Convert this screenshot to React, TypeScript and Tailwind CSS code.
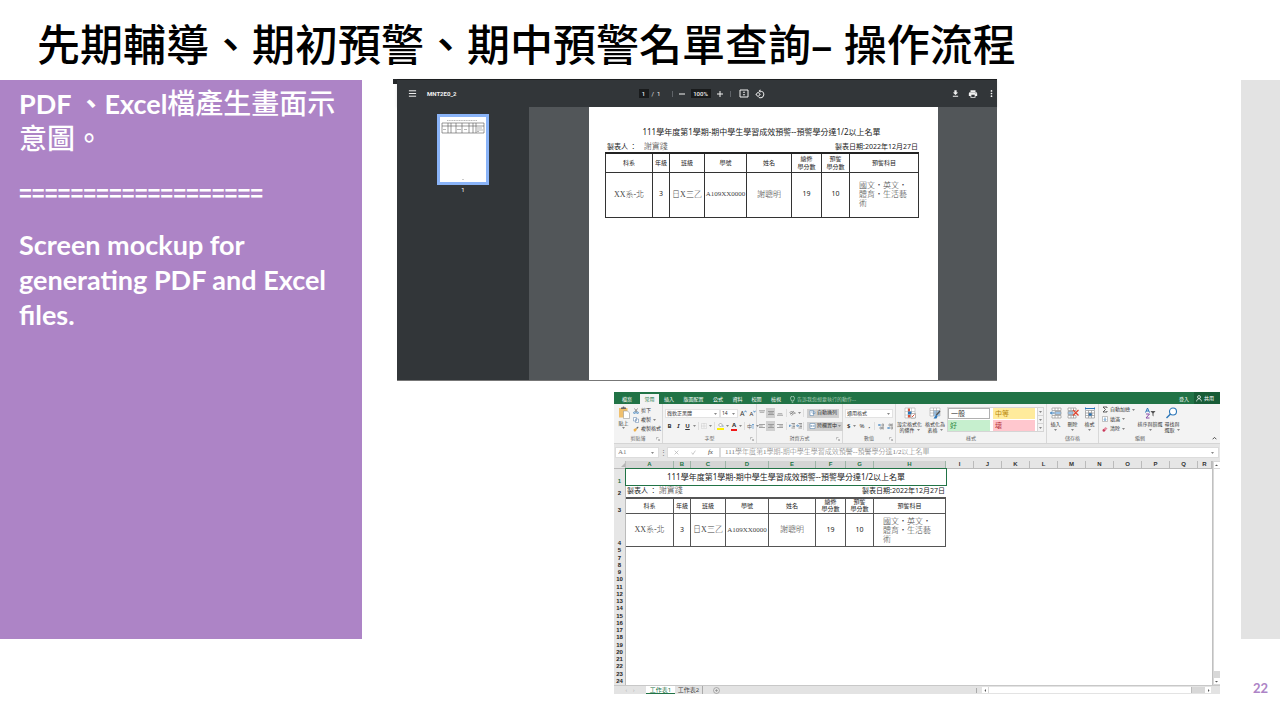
import React from 'react';

const REPORT_TITLE = '111學年度第1學期-期中學生學習成效預警--預警學分達1/2以上名單';

const SANS = "font-['Noto_Sans','Noto_Sans_CJK_TC',sans-serif]";
const SERIF = "font-['Liberation_Serif','Noto_Sans_CJK_TC',serif] font-light text-[#444]";

const fields = [
  { name: '科系', value: 'XX系-北', typed: true, pdf: 'w-[47px]', sheet: 'w-[48px]' },
  { name: '年級', value: '3', typed: false, pdf: 'w-[17px]', sheet: 'w-[17px]' },
  { name: '班級', value: '日X三乙', typed: true, pdf: 'w-[35px]', sheet: 'w-[35px]' },
  { name: '學號', value: 'A109XX0000', typed: true, pdf: 'w-[42px]', sheet: 'w-[43px]' },
  { name: '姓名', value: '謝聰明', typed: true, pdf: 'w-[45px]', sheet: 'w-[47px]' },
  { name: '總修\n學分數', value: '19', typed: false, pdf: 'w-[30px]', sheet: 'w-[30px]' },
  { name: '預警\n學分數', value: '10', typed: false, pdf: 'w-[28px]', sheet: 'w-[28px]' },
  {
    name: '預警科目',
    value: '國文・英文・\n體育・生活藝\n術',
    typed: true,
    pdf: 'w-[69px]',
    sheet: 'w-[72px]',
  },
];

const valueClass = (value: string, typed: boolean) => {
  if (!typed) return 'text-[7px] text-center';
  if (value.startsWith('A109')) return `${SERIF} text-[7px] text-center`;
  if (value.includes('\n')) return `${SERIF} text-[8px] leading-[9px] text-left pl-[9px]`;
  return `${SERIF} text-[8px] text-center`;
};

const Caret: React.FC = () => (
  <svg viewBox="0 0 6 4" className="w-[3px] h-[2px] shrink-0" fill="#888">
    <path d="M0 0h6L3 4z" />
  </svg>
);

const Launcher: React.FC = () => (
  <svg viewBox="0 0 8 8" className="w-1 h-1" fill="none" stroke="#888">
    <path d="M1 5V1h4M4 4l3 3M7 4v3H4" />
  </svg>
);

/* ---------- PDF viewer ---------- */

const ReportTable: React.FC = () => (
  <table className="w-full table-fixed border-collapse border border-t-2 border-[#222]">
    <thead>
      <tr className="h-[19px]">
        {fields.map(field => (
          <th
            key={field.name}
            className={`${field.pdf} border border-[#333] p-0 text-[6px] leading-[8px] font-normal whitespace-pre`}
          >
            {field.name}
          </th>
        ))}
      </tr>
    </thead>
    <tbody>
      <tr className="h-[45px]">
        {fields.map(field => (
          <td
            key={field.name}
            className={`border border-[#333] p-0 whitespace-pre ${valueClass(field.value, field.typed)}`}
          >
            {field.value}
          </td>
        ))}
      </tr>
    </tbody>
  </table>
);

const PageThumbnail: React.FC = () => (
  <svg viewBox="0 0 46 65" className="w-full bg-white" fill="none" stroke="#555" strokeWidth="0.6">
    <path d="M7 3.5h30" stroke="#888" strokeDasharray="1.2 .5" />
    <path d="M2 6h42v10H2zM2 9h42M8 6v10M11 6v10M16 6v10M22 6v10M29 6v10M33 6v10M36 6v10" />
    <path d="M37 11h5M37 13h6M37 14.5h2M3 12.5h3M17 12.5h4M24 12.5h3" stroke="#888" />
    <path d="M22 62.5h2" stroke="#aaa" />
  </svg>
);

const toolbarButton = 'flex items-center justify-center w-[10px] h-[10px]';

const PdfToolbar: React.FC = () => (
  <div className="h-7 flex items-center bg-[#323639] text-[#f1f1f1] text-[6px] font-['Roboto',sans-serif] border-t border-[#1d1f21] shadow-sm">
    <div className="flex-1 flex items-center gap-[10px] pl-[10px]">
      <button className={toolbarButton} aria-label="選單">
        <svg viewBox="0 0 10 10" className="w-[9px] h-[9px]" stroke="#f1f1f1" strokeWidth="1.1">
          <path d="M1 2h8M1 5h8M1 8h8" />
        </svg>
      </button>
      <span className="font-bold">MNT2E0_2</span>
    </div>
    <div className="flex items-center">
      <input
        aria-label="頁碼"
        defaultValue="1"
        className="w-[10px] h-[9px] bg-[#191b1c] text-center font-medium"
      />
      <span className="pl-[3px] w-[23px] whitespace-pre">/  1</span>
      <span className="w-px h-[6px] bg-[#5f6368]" />
      <button className={`${toolbarButton} ml-1`} aria-label="縮小">
        <svg viewBox="0 0 8 8" className="w-2 h-2" stroke="#f1f1f1">
          <path d="M1 4h6" />
        </svg>
      </button>
      <input
        aria-label="縮放"
        defaultValue="100%"
        className="w-5 h-[9px] mx-[4px] bg-[#191b1c] text-center font-medium"
      />
      <button className={toolbarButton} aria-label="放大">
        <svg viewBox="0 0 8 8" className="w-2 h-2" stroke="#f1f1f1">
          <path d="M1 4h6M4 1v6" />
        </svg>
      </button>
      <span className="w-px h-[6px] mx-[5px] bg-[#5f6368]" />
      <button className={`${toolbarButton} ml-[3px]`} aria-label="符合頁面大小">
        <svg viewBox="0 0 20 18" className="w-[10px] h-[9px]" fill="none" stroke="#f1f1f1" strokeWidth="2">
          <path d="M2 2h16v14H2z" />
          <path d="M10 4.5 7.5 7.5h5zM10 13.5 7.5 10.5h5z" fill="#f1f1f1" stroke="none" />
        </svg>
      </button>
      <button className={`${toolbarButton} ml-[6px]`} aria-label="旋轉">
        <svg viewBox="0 0 24 24" className="w-[10px] h-[10px]" fill="#f1f1f1">
          <path d="M7.34 6.41.86 12.9l6.49 6.48 6.49-6.48zM3.69 12.9l3.66-3.66L11 12.9l-3.66 3.66zm15.67-6.26A8.95 8.95 0 0 0 13 4V.76L8.76 5 13 9.24V6a7 7 0 1 1-3.01 13.32L8.5 20.81A9 9 0 0 0 19.36 6.64" />
        </svg>
      </button>
    </div>
    <div className="flex-1 flex justify-end items-center gap-2 pr-[1px]">
      <button className={toolbarButton} aria-label="下載">
        <svg viewBox="0 0 24 24" className="w-[9px] h-[9px]" fill="#f1f1f1">
          <path d="M19 9h-4V3H9v6H5l7 7zM5 18v2.5h14V18z" />
        </svg>
      </button>
      <button className={toolbarButton} aria-label="列印">
        <svg viewBox="0 0 24 24" className="w-[10px] h-[10px]" fill="#f1f1f1">
          <path d="M19 8H5a3 3 0 0 0-3 3v6h4v4h12v-4h4v-6a3 3 0 0 0-3-3m-3 11H8v-5h8zm3-7a1 1 0 1 1 0-2 1 1 0 0 1 0 2M18 3H6v4h12z" />
        </svg>
      </button>
      <button className={toolbarButton} aria-label="更多">
        <svg viewBox="0 0 24 24" className="w-[9px] h-[9px]" fill="#f1f1f1">
          <circle cx="12" cy="5" r="2.3" />
          <circle cx="12" cy="12" r="2.3" />
          <circle cx="12" cy="19" r="2.3" />
        </svg>
      </button>
    </div>
  </div>
);

const PdfViewer: React.FC = () => (
  <section className="flex mr-[244px]">
    <div className="w-1 h-[5px] bg-[#26292b]" />
    <div className="flex-1">
      <PdfToolbar />
      <div className="flex h-[274px] border-b border-[#777]">
        <aside className="w-[132px] bg-[#323639] pt-[7px] flex flex-col items-center">
          <button className="w-[52px] border-[3px] border-[#8ab4f8]" aria-label="第 1 頁">
            <PageThumbnail />
          </button>
          <span className="text-[6px] leading-[10px] text-white font-['Roboto',sans-serif]">1</span>
        </aside>
        <div className="flex-1 bg-[#525659] flex justify-center pl-[1px]">
          <article className={`w-[349px] bg-white pl-4 pr-5 pt-[18px] text-[#222] ${SANS}`}>
            <h2 className="text-[8px] leading-[14px] text-center whitespace-nowrap">{REPORT_TITLE}</h2>
            <div className="flex items-center justify-between h-[13px] pt-[2px] pl-[2px] text-[7px] leading-[8px]">
              <span>
                製表人 ： <span className={`${SERIF} text-[8px] ml-[5px]`}>謝實踐</span>
              </span>
              <span>製表日期:2022年12月27日</span>
            </div>
            <ReportTable />
          </article>
        </div>
      </div>
    </div>
  </section>
);

/* ---------- Excel window ---------- */

const ribbonTabs = [
  { label: '檔案', width: 'w-[26px]' },
  { label: '常用', width: 'w-[19px]' },
  { label: '插入', width: 'w-5' },
  { label: '版面配置', width: 'w-[29px]' },
  { label: '公式', width: 'w-5' },
  { label: '資料', width: 'w-[19px]' },
  { label: '校閱', width: 'w-[19px]' },
  { label: '檢視', width: 'w-5' },
];

const TabBar: React.FC = () => (
  <nav className="h-3 flex items-end bg-[#217346] text-white text-[5px] leading-[10px]">
    {ribbonTabs.map(tab => (
      <button
        key={tab.label}
        className={`${tab.width} h-[10px] ${
          tab.label === '常用' ? 'bg-[#f3f3f3] text-[#217346]' : ''
        }`}
      >
        {tab.label}
      </button>
    ))}
    <button className="flex items-center h-[10px] pl-1 gap-[2px] text-[#a9cdb9] whitespace-nowrap">
      <svg viewBox="0 0 10 14" className="w-[5px] h-[7px]" fill="none" stroke="#b9d8c6" strokeWidth="1.5">
        <path d="M3 10C3 8 1 7 1 4.5a4 4 0 0 1 8 0C9 7 7 8 7 10zM3.5 12.5h3" />
      </svg>
      告訴我您想要執行的動作...
    </button>
    <span className="flex-1" />
    <button className="pr-[5px]">登入</button>
    <button className="w-[26px] h-3 flex items-center gap-[2px] pl-[2px] bg-[#185c37]">
      <svg viewBox="0 0 10 12" className="w-[6px] h-[7px]" fill="none" stroke="#fff" strokeWidth="1.3">
        <circle cx="5" cy="3.5" r="2.5" />
        <path d="M1 11c0-6 8-6 8 0" />
      </svg>
      共用
    </button>
  </nav>
);

interface GroupProps {
  label: string;
  className: string;
  launcher?: boolean;
  children: React.ReactNode;
}

const Group: React.FC<GroupProps> = ({ label, className, launcher, children }) => (
  <div className={`flex flex-col border-r border-[#d8d8d8] ${className}`}>
    <div className="flex-1 min-h-0 flex">{children}</div>
    <div className="relative h-[10px] shrink-0 text-center text-[5px] leading-[10px] text-[#666]">
      {label}
      {launcher && (
        <span className="absolute right-[2px] top-1">
          <Launcher />
        </span>
      )}
    </div>
  </div>
);

const AlignLines: React.FC<{ d: string; active?: boolean; label: string }> = ({ d, active, label }) => (
  <button
    aria-label={label}
    className={`w-[9px] h-[10px] flex items-center justify-center ${active ? 'bg-[#cfcfcf]' : ''}`}
  >
    <svg viewBox="0 0 8 8" className="w-[6px] h-[6px]" stroke="#8a8a8a" strokeWidth="1">
      <path d={d} />
    </svg>
  </button>
);

const Combo: React.FC<{ label: string; value: string; width: string }> = ({ label, value, width }) => (
  <span className={`${width} h-[9px] flex items-center bg-white border border-[#e2e2e2] pr-[2px]`}>
    <select aria-label={label} className="flex-1 min-w-0 appearance-none pl-[1px] text-[5px] leading-[7px]">
      <option>{value}</option>
    </select>
    <Caret />
  </span>
);

const ClipboardGroup: React.FC = () => (
  <Group label="剪貼簿" className="w-[49px]" launcher>
    <button className="w-[19px] flex flex-col items-center pt-[2px] text-[5px] leading-[8px]">
      <svg viewBox="0 0 24 26" className="w-3 h-[13px]">
        <path d="M2 4h17v19H2z" fill="#f0c06e" />
        <path d="M6 6V3h3a2 2 0 0 1 4 0h3v3z" fill="#666" />
        <path d="M11 10h8l4 4v11H11z" fill="#fff" stroke="#888" />
      </svg>
      貼上
      <Caret />
    </button>
    <div className="flex flex-col justify-between pt-[2px] text-[5px] leading-[9px] whitespace-nowrap">
      <button className="flex items-center gap-[2px]">
        <svg viewBox="0 0 12 12" className="w-[6px] h-[6px]" fill="none" strokeWidth="1.4">
          <path d="M3 1l5 7M9 1L4 8" stroke="#666" />
          <circle cx="3" cy="9.5" r="1.8" stroke="#2b76b9" />
          <circle cx="9" cy="9.5" r="1.8" stroke="#2b76b9" />
        </svg>
        剪下
      </button>
      <button className="flex items-center gap-[2px]">
        <svg viewBox="0 0 12 12" className="w-[6px] h-[6px]" fill="#fff" stroke="#5b7fa8">
          <path d="M1 1h6v7H1zM5 4h6v7H5z" />
        </svg>
        複製 <Caret />
      </button>
      <button className="flex items-center gap-[2px]">
        <svg viewBox="0 0 12 12" className="w-[6px] h-[6px]">
          <path d="M1 7l4-3 3 3-3 4H2z" fill="#eeb04c" />
          <path d="M6 4l4-3 1 2-3 3z" fill="#666" />
        </svg>
        複製格式
      </button>
    </div>
  </Group>
);

const growFont = [
  { label: '放大字型', size: 'text-[7px]', d: 'M1 4l2-3 2 3' },
  { label: '縮小字型', size: 'text-[6px]', d: 'M1 1l2 3 2-3' },
];

const FontGroup: React.FC = () => (
  <Group label="字型" className="w-[94px]" launcher>
    <div className="flex-1 flex flex-col gap-[3px] pt-[5px] pl-[2px]">
      <div className="flex items-center h-[9px]">
        <Combo label="字型" value="微軟正黑體" width="w-[55px]" />
        <Combo label="字型大小" value="14" width="w-[18px]" />
        {growFont.map(item => (
          <button key={item.label} aria-label={item.label} className={`flex ml-[2px] leading-[8px] ${item.size}`}>
            A
            <svg viewBox="0 0 6 5" className="w-[3px] h-[3px]" fill="none" stroke="#2b76b9" strokeWidth="1.5">
              <path d={item.d} />
            </svg>
          </button>
        ))}
      </div>
      <div className="flex items-center text-[6px] leading-[10px] pl-[1px] gap-[2px]">
        <button className="w-[7px] font-bold">B</button>
        <button className="w-[7px] italic font-bold">I</button>
        <button className="w-[7px] underline font-bold">U</button>
        <Caret />
        <span className="w-px h-2 bg-[#ddd]" />
        <button aria-label="框線">
          <svg viewBox="0 0 12 12" className="w-[6px] h-[6px]" fill="none" stroke="#aaa">
            <path d="M1 1h10v10H1zM6 1v10M1 6h10" strokeDasharray="1 1" />
          </svg>
        </button>
        <Caret />
        <span className="w-px h-2 bg-[#ddd]" />
        <button aria-label="填滿色彩">
          <svg viewBox="0 0 14 16" className="w-[7px] h-2">
            <path d="M3 6l4-4 4 4-4 4z" fill="#fff" stroke="#666" />
            <path d="M12 6c1 2 1 3 0 4s-1-2 0-4" fill="#2b76b9" />
            <path d="M0 12h14v4H0z" fill="#ffef00" />
          </svg>
        </button>
        <Caret />
        <button className="w-[6px] leading-[7px] font-bold border-b-2 border-[#f01818]">A</button>
        <Caret />
        <span className="w-px h-2 bg-[#ddd]" />
        <button className="flex items-center text-[5px] text-[#666]">
          中
          <svg viewBox="0 0 4 10" className="w-[2px] h-[5px]" fill="none" stroke="#2b76b9">
            <path d="M2 0v10M0 2l2-2 2 2" />
          </svg>
        </button>
        <Caret />
      </div>
    </div>
  </Group>
);

const AlignmentGroup: React.FC = () => (
  <Group label="對齊方式" className="w-[86px]" launcher>
    <div className="flex-1 flex flex-col gap-[2px] pt-1 text-[5px]">
      <div className="flex items-center h-[10px]">
        <AlignLines label="靠上對齊" d="M0 1h8M1 3h6" />
        <AlignLines label="置中對齊" d="M0 2h8M1 4h6M0 6h8" active />
        <AlignLines label="靠下對齊" d="M1 5h6M0 7h8" />
        <span className="w-px h-2 mx-[2px] bg-[#ddd]" />
        <button className="w-[14px] flex items-center gap-[2px]" aria-label="方向">
          <svg viewBox="0 0 14 12" className="w-[7px] h-[6px]" fill="none" stroke="#666" strokeWidth="1.3">
            <path d="M2 9l8-7M5 11l7-6M2 5l3-3 3 3-3 3zM12 5v3" />
          </svg>
          <Caret />
        </button>
        <span className="w-px h-2 mr-[3px] bg-[#ddd]" />
        <button className="flex items-center gap-[1px] h-[9px] px-[2px] bg-[#cfcfcf] whitespace-nowrap">
          <svg viewBox="0 0 12 12" className="w-[7px] h-[6px]" fill="#fff" stroke="#4a7ba8">
            <path d="M1 1h7v10H1zM3 4h8v3H6" />
          </svg>
          自動換列
        </button>
      </div>
      <div className="flex items-center h-[10px] mt-[1px]">
        <AlignLines label="靠左對齊" d="M0 2h8M0 4h5M0 6h8" />
        <AlignLines label="置中" d="M0 2h8M2 4h4M0 6h8" active />
        <AlignLines label="靠右對齊" d="M0 2h8M3 4h5M0 6h8" />
        <span className="w-px h-2 mx-[2px] bg-[#ddd]" />
        <button className="w-[7px]" aria-label="減少縮排">
          <svg viewBox="0 0 12 12" className="w-[6px] h-[6px]" fill="none" stroke="#666" strokeWidth="1.3">
            <path d="M5 1h7M7 4h5M7 7h5M5 10h7" />
            <path d="M5 5.5H0M2 3L0 5.5 2 8" stroke="#2b76b9" />
          </svg>
        </button>
        <button className="w-[7px]" aria-label="增加縮排">
          <svg viewBox="0 0 12 12" className="w-[6px] h-[6px]" fill="none" stroke="#666" strokeWidth="1.3">
            <path d="M5 1h7M7 4h5M7 7h5M5 10h7" />
            <path d="M0 5.5h5M3 3l2 2.5L3 8" stroke="#2b76b9" />
          </svg>
        </button>
        <span className="w-px h-2 mr-[3px] bg-[#ddd]" />
        <button className="flex items-center gap-[1px] h-[9px] px-[2px] bg-[#cfcfcf] whitespace-nowrap">
          <svg viewBox="0 0 12 12" className="w-[7px] h-[6px]" fill="#fff" stroke="#4a7ba8">
            <path d="M1 1h10v10H1zM3 6h6M4 4L2 6l2 2M8 4l2 2-2 2" />
          </svg>
          跨欄置中
          <Caret />
        </button>
      </div>
    </div>
  </Group>
);

const NumberGroup: React.FC = () => (
  <Group label="數值" className="w-[53px]" launcher>
    <div className="flex-1 flex flex-col gap-[3px] pt-[5px] px-[2px]">
      <Combo label="數值格式" value="通用格式" width="w-full" />
      <div className="flex items-center gap-[3px] pl-[2px] text-[6px] leading-[10px]">
        <button className="font-bold">$</button>
        <Caret />
        <button>%</button>
        <button className="w-1 font-bold">,</button>
        <span className="w-px h-2 bg-[#ddd]" />
        <button aria-label="增加小數位數">
          <svg viewBox="0 0 12 12" className="w-[6px] h-[7px]" fill="none" strokeWidth="1.5">
            <path d="M6 3H1M3 1L1 3l2 2" stroke="#2b76b9" />
            <path d="M8 1h3v4H8zM4 7h3v4H4zM9 7h3v4H9z" stroke="#666" strokeWidth="1" />
          </svg>
        </button>
        <button aria-label="減少小數位數">
          <svg viewBox="0 0 12 12" className="w-[6px] h-[7px]" fill="none" strokeWidth="1.5">
            <path d="M0 9h5M3 7l2 2-2 2" stroke="#2b76b9" />
            <path d="M4 1h3v4H4zM9 1h3v4H9zM8 7h3v4H8z" stroke="#666" strokeWidth="1" />
          </svg>
        </button>
      </div>
    </div>
  </Group>
);

const galleryStyles = [
  { label: '一般', className: 'bg-white text-[#333] border border-[#b0b0b0]' },
  { label: '中等', className: 'bg-[#ffeb9c] text-[#b8860b]' },
  { label: '好', className: 'bg-[#c6efce] text-[#2d8a3e]' },
  { label: '壞', className: 'bg-[#ffc7ce] text-[#b3262b]' },
];

const bigButton = 'flex flex-col items-center text-[5px] leading-[6px] whitespace-nowrap';

const StylesGroup: React.FC = () => (
  <Group label="樣式" className="w-[151px]">
    <button className={`${bigButton} w-[27px] pt-[3px]`}>
      <svg viewBox="0 0 24 24" className="w-3 h-3 mb-[2px] shrink-0">
        <path d="M2 2h20v20H2z" fill="#fff" stroke="#999" />
        <path d="M8 2v20M15 2v20M2 9h20M2 16h20" stroke="#aaa" />
        <path d="M8 3h4v6H8zM8 16h5v5H8z" fill="#d8543c" />
        <path d="M8 9h7v6H8z" fill="#2b76b9" />
        <path d="M14 13h9v9h-9z" fill="#fff" stroke="#777" />
        <path d="M16 20l5-5" stroke="#d8543c" strokeWidth="2" />
      </svg>
      設定格式化
      <span className="flex items-center gap-[2px]">
        的條件 <Caret />
      </span>
    </button>
    <button className={`${bigButton} w-[24px] pt-[3px]`}>
      <svg viewBox="0 0 24 24" className="w-3 h-3 mb-[2px] shrink-0">
        <path d="M2 2h20v16H2z" fill="#fff" stroke="#999" />
        <path d="M9 7h13v11H9z" fill="#9dc3e6" />
        <path d="M2 7h20M2 12h20M9 2v16M15 2v16" stroke="#999" />
        <path d="M22 8l-8 9" stroke="#555" strokeWidth="2.5" />
        <path d="M14 16l-5 7h6l2-4z" fill="#2b76b9" />
      </svg>
      格式化為
      <span className="flex items-center gap-[2px]">
        表格 <Caret />
      </span>
    </button>
    <div className="flex flex-1 mt-[3px] mb-[1px] mr-[2px] bg-white border border-[#d5d5d5]">
      <div className="flex-1 grid grid-cols-2 grid-rows-2 gap-x-[3px] gap-y-[1px]">
        {galleryStyles.map(style => (
          <button
            key={style.label}
            className={`flex items-center pl-[2px] text-[7px] leading-[8px] ${style.className}`}
          >
            {style.label}
          </button>
        ))}
      </div>
      <div className="w-[6px] ml-[2px] flex flex-col bg-[#f3f3f3] divide-y divide-[#d5d5d5] border-l border-[#d5d5d5]">
        {['上一列', '下一列', '其他'].map(label => (
          <button key={label} aria-label={label} className="flex-1 flex items-center justify-center">
            <Caret />
          </button>
        ))}
      </div>
    </div>
  </Group>
);

const CellsGroup: React.FC = () => (
  <Group label="儲存格" className="w-[52px]">
    <button className={`${bigButton} w-[17px] pt-[3px]`}>
      <svg viewBox="0 0 24 24" className="w-3 h-3 mb-[2px]" fill="#fff" stroke="#999" strokeWidth="1.5">
        <path d="M4 2h18v5H4zM4 17h18v5H4zM10 2v5M16 2v5M10 17v5M16 17v5" />
        <path d="M10 9h12v6H10z" fill="#9dc3e6" />
        <path d="M9 12H1M4 9l-3 3 3 3" fill="none" stroke="#2b76b9" strokeWidth="2" />
      </svg>
      插入
      <span className="mt-[2px]"><Caret /></span>
    </button>
    <button className={`${bigButton} w-[17px] pt-[3px]`}>
      <svg viewBox="0 0 24 24" className="w-3 h-3 mb-[2px]" fill="#fff" stroke="#999" strokeWidth="1.5">
        <path d="M2 2h16v5H2zM2 17h16v5H2zM8 2v5M13 2v5M8 17v5M13 17v5" />
        <path d="M2 9h10v6H2z" fill="#9dc3e6" />
        <path d="M12 6l11 11M23 6L12 17" stroke="#e0452f" strokeWidth="2.5" />
      </svg>
      刪除
      <span className="mt-[2px]"><Caret /></span>
    </button>
    <button className={`${bigButton} w-[17px] pt-[3px]`}>
      <svg viewBox="0 0 24 24" className="w-3 h-3 mb-[2px]" fill="#fff" stroke="#999" strokeWidth="1.5">
        <path d="M3 7h18v15H3zM9 7v15M15 7v15M3 12h18M3 17h18" />
        <path d="M9 12h7v6H9z" fill="#2b76b9" />
        <path d="M3 3h18M3 1v4M21 1v4" stroke="#2b76b9" strokeWidth="2" />
      </svg>
      格式
      <span className="mt-[2px]"><Caret /></span>
    </button>
  </Group>
);

const EditingGroup: React.FC = () => (
  <div className="flex-1 flex flex-col">
    <div className="flex-1 min-h-0 flex">
      <div className="w-[38px] pl-[3px] pt-[1px] flex flex-col justify-between text-[5px] leading-[9px] whitespace-nowrap">
        <button className="flex items-center gap-[2px]">
          <svg viewBox="0 0 12 12" className="w-[6px] h-[7px]" fill="none" stroke="#444" strokeWidth="1.7">
            <path d="M10 3V1H2l5 5-5 5h8V9" />
          </svg>
          自動加總 <Caret />
        </button>
        <button className="flex items-center gap-[2px]">
          <svg viewBox="0 0 12 12" className="w-[6px] h-[6px]" fill="#fff" stroke="#888">
            <path d="M1 1h10v10H1z" />
            <path d="M6 3v6M4 7l2 2 2-2" stroke="#2b76b9" strokeWidth="1.5" />
          </svg>
          填滿 <Caret />
        </button>
        <button className="flex items-center gap-[2px]">
          <svg viewBox="0 0 12 12" className="w-[6px] h-[6px]">
            <path d="M1 8l6-6 4 3-6 6H2z" fill="#e58ba0" />
            <path d="M1 8l2-2 4 3-2 2H2z" fill="#c8385a" />
          </svg>
          清除 <Caret />
        </button>
      </div>
      <button className={`${bigButton} w-[26px] pt-[3px]`}>
        <svg viewBox="0 0 24 24" className="w-3 h-3 mb-[2px]" fill="none" strokeWidth="2">
          <path d="M3 11l4-9 4 9M4.5 8h5" stroke="#2b76b9" />
          <path d="M4 14h7l-7 8h7" stroke="#8a4fa8" />
          <path d="M13 8h10l-4 5v6l-2-2v-4z" fill="#555" />
        </svg>
        排序與篩選
        <span className="mt-[2px]"><Caret /></span>
      </button>
      <button className={`${bigButton} w-[18px] pt-[3px]`}>
        <svg viewBox="0 0 24 24" className="w-3 h-3 mb-[2px] shrink-0" fill="#fff" stroke="#2b76b9" strokeWidth="2.2">
          <circle cx="14" cy="9" r="7" />
          <path d="M9 14l-8 8" strokeWidth="3" />
        </svg>
        尋找與
        <span className="flex items-center gap-[2px]">
          選取 <Caret />
        </span>
      </button>
    </div>
    <div className="flex items-center justify-between h-[10px] shrink-0 pl-9 pr-[3px] text-[5px] leading-[10px] text-[#666]">
      編輯
      <button aria-label="摺疊功能區">
        <svg viewBox="0 0 8 6" className="w-[5px] h-1" fill="none" stroke="#444" strokeWidth="1.5">
          <path d="M1 5l3-3 3 3" />
        </svg>
      </button>
    </div>
  </div>
);

const FormulaBar: React.FC = () => (
  <div className="flex items-center h-[17px] px-[1px] bg-[#e6e6e6] text-[7px] text-[#777]">
    <span className="w-11 h-[11px] flex items-center bg-white border border-[#dcdcdc] pr-1">
      <input
        aria-label="名稱方塊"
        defaultValue="A1"
        className="flex-1 min-w-0 pl-[2px] font-['Liberation_Serif',serif]"
      />
      <Caret />
    </span>
    <span className="w-2 text-center leading-[10px]">⋮</span>
    <span className="w-[53px] h-[11px] flex items-center justify-around bg-white border border-[#dcdcdc]">
      <button aria-label="取消">
        <svg viewBox="0 0 8 8" className="w-[5px] h-[5px]" stroke="#aaa">
          <path d="M1 1l6 6M7 1L1 7" />
        </svg>
      </button>
      <button aria-label="輸入">
        <svg viewBox="0 0 8 8" className="w-[5px] h-[5px]" fill="none" stroke="#aaa">
          <path d="M1 4l2 3 4-6" />
        </svg>
      </button>
      <button className="font-['Liberation_Serif',serif] italic leading-[9px] text-[#444]">fx</button>
    </span>
    <span className="flex-1 h-[11px] flex items-center bg-white border border-[#dcdcdc] pr-1">
      <input
        aria-label="資料編輯列"
        defaultValue={REPORT_TITLE}
        className="flex-1 min-w-0 pl-1 font-['Liberation_Serif','Noto_Sans_CJK_TC',serif] font-light"
      />
      <Caret />
    </span>
  </div>
);

const sheetColumns = [
  ...fields.map((field, i) => ({ letter: 'ABCDEFGH'[i], width: field.sheet, active: true })),
  ...'IJKLMNOPQ'.split('').map(letter => ({ letter, width: 'w-[28px]', active: false })),
  { letter: 'R', width: '', active: false },
];

const rowNumber =
  "p-0 bg-[#e6e6e6] border-r border-[#bbb] align-bottom text-center font-['Liberation_Sans',sans-serif] font-bold text-[6px] leading-[7px]";

const emptyRows = [5, 7, 8, 9, 10, 11, 12, 13, 14, 15, 16, 17, 18, 19, 20, 21, 22, 23, 24];

const Sheet: React.FC = () => (
  <table className="w-full h-[224px] table-fixed border-separate border-spacing-0 bg-white text-[#222]">
    <thead>
      <tr className="h-2 bg-[#e6e6e6] font-['Liberation_Sans',sans-serif] text-[6px] leading-[7px]">
        <th className="w-3 p-0 border-r border-b border-[#bbb]">
          <svg viewBox="0 0 6 6" className="w-1 h-1 ml-auto" fill="#b5b5b5">
            <path d="M6 0v6H0z" />
          </svg>
        </th>
        {sheetColumns.map(column => (
          <th
            key={column.letter}
            className={`${column.width} p-0 border-r border-b ${
              column.active ? 'bg-[#d5d5d5] text-[#217346] border-[#9fb5a8]' : 'text-[#333] border-[#bbb]'
            }`}
          >
            {column.letter}
          </th>
        ))}
      </tr>
    </thead>
    <tbody>
      <tr className="h-4">
        <th className={`${rowNumber} text-[#217346]`}>1</th>
        <td
          colSpan={8}
          className="relative p-0 outline outline-[#217346] text-center text-[8px] leading-[14px]"
        >
          {REPORT_TITLE}
        </td>
        <td colSpan={10} className="p-0" />
      </tr>
      <tr className="h-3">
        <th className={rowNumber}>2</th>
        <td colSpan={8} className="p-0 text-[7px] leading-[10px]">
          <div className="flex items-center justify-between px-[1px]">
            <span>
              製表人 ： <span className={`${SERIF} text-[8px]`}>謝實踐</span>
            </span>
            <span>製表日期:2022年12月27日</span>
          </div>
        </td>
        <td colSpan={10} className="p-0" />
      </tr>
      <tr className="h-4">
        <th className={rowNumber}>3</th>
        {fields.map(field => (
          <td
            key={field.name}
            className="p-0 border-t-2 border-r border-b border-[#555] text-center text-[6px] leading-[7px] whitespace-pre"
          >
            {field.name}
          </td>
        ))}
        <td colSpan={10} className="p-0" />
      </tr>
      <tr className="h-[33px]">
        <th className={rowNumber}>4</th>
        {fields.map(field => (
          <td
            key={field.name}
            className={`p-0 border-r border-b border-[#555] whitespace-pre ${valueClass(field.value, field.typed)}`}
          >
            {field.value}
          </td>
        ))}
        <td colSpan={10} className="p-0" />
      </tr>
      {emptyRows.map(n => (
        <tr key={n}>
          <th className={rowNumber}>{n}</th>
          <td colSpan={18} className="p-0" />
        </tr>
      ))}
    </tbody>
  </table>
);

const ScrollButton: React.FC<{ d: string; label: string }> = ({ d, label }) => (
  <button aria-label={label} className="w-[6px] h-[6px] bg-white flex items-center justify-center shrink-0">
    <svg viewBox="0 0 6 6" className="w-[3px] h-[3px]" fill="#555">
      <path d={d} />
    </svg>
  </button>
);

const SheetTabs: React.FC = () => (
  <div className="flex items-center h-[9px] bg-[#e3e3e3] text-[6px] leading-[8px] text-[#444] border-t border-[#c8c8c8]">
    <span className="w-8 flex justify-center gap-[6px] text-[#aaa] text-[5px]">
      <button aria-label="上一張工作表">‹</button>
      <button aria-label="下一張工作表">›</button>
    </span>
    <button className="w-[29px] h-full bg-white text-[#217346] border-b border-[#217346]">工作表1</button>
    <button className="w-7 h-full border-r border-[#aaa]">工作表2</button>
    <button className="ml-[10px]" aria-label="新增工作表">
      <svg viewBox="0 0 14 14" className="w-[7px] h-[7px]" fill="none" stroke="#777">
        <path d="M7 4v6M4 7h6" />
        <circle cx="7" cy="7" r="6" />
      </svg>
    </button>
    <span className="flex-1" />
    <span className="w-px h-[5px] mr-[5px] bg-[#aaa]" />
    <div className="w-[229px] flex items-center gap-[1px] bg-[#d8d8d8]">
      <ScrollButton label="向左捲動" d="M4 0v6L1 3z" />
      <span className="w-[203px] h-[6px] bg-white border-r border-[#bbb]" />
      <span className="flex-1" />
      <ScrollButton label="向右捲動" d="M2 0v6l3-3z" />
    </div>
    <span className="w-[9px]" />
  </div>
);

const ExcelWindow: React.FC = () => (
  <section className={`ml-[221px] mr-[21px] text-[#333] ${SANS}`}>
    <TabBar />
    <div className="flex h-10 bg-[#f3f3f3] border-b border-[#d5d5d5]">
      <ClipboardGroup />
      <FontGroup />
      <AlignmentGroup />
      <NumberGroup />
      <StylesGroup />
      <CellsGroup />
      <EditingGroup />
    </div>
    <FormulaBar />
    <div className="flex">
      <div className="flex-1 min-w-0">
        <Sheet />
      </div>
      <div className="w-2 flex flex-col items-center bg-[#d8d8d8] border-l border-[#c0c0c0] py-[1px]">
        <ScrollButton label="向上捲動" d="M0 4h6L3 1z" />
        <span className="w-[6px] h-[202px] mt-[1px] bg-white" />
        <span className="flex-1" />
        <ScrollButton label="向下捲動" d="M0 2h6L3 5z" />
      </div>
    </div>
    <SheetTabs />
  </section>
);

/* ---------- Slide ---------- */

const App: React.FC = () => {
  return (
    <div className={`min-h-screen bg-white ${SANS}`}>
      <header className="h-[79px] pt-[13px] pl-[37px]">
        <h1 className="text-[43px] leading-[64px] font-medium text-black whitespace-nowrap">
          先期輔導、期初預警、期中預警名單查詢– 操作流程
        </h1>
      </header>
      <main className="flex items-start">
        <div className="w-[362px] shrink-0 h-[559px] mt-[1px] pl-[19px] pr-5 pt-[6px] bg-[#ad84c6] text-white text-[27px] leading-[35px] font-bold font-['Lato','Noto_Sans_CJK_TC',sans-serif]">
          <p>
            PDF 、Excel<span className="text-[28px] font-medium">檔產生畫面示意圖。</span>
          </p>
          <p className="mt-5 text-[22px] font-['Liberation_Sans',sans-serif]">===================</p>
          <p className="mt-4">Screen mockup for generating PDF and Excel files.</p>
        </div>
        <div className="flex-1 min-w-0 pl-[31px] flex flex-col gap-[11px]">
          <PdfViewer />
          <ExcelWindow />
        </div>
        <div className="w-[39px] shrink-0 mt-[1px]">
          <div className="h-[559px] bg-[#e3e3e3]" />
          <p className="mt-[39px] pr-3 text-right text-[13px] leading-5 font-bold text-[#ad84c6] font-['Lato',sans-serif]">
            22
          </p>
        </div>
      </main>
    </div>
  );
};

export default App;
